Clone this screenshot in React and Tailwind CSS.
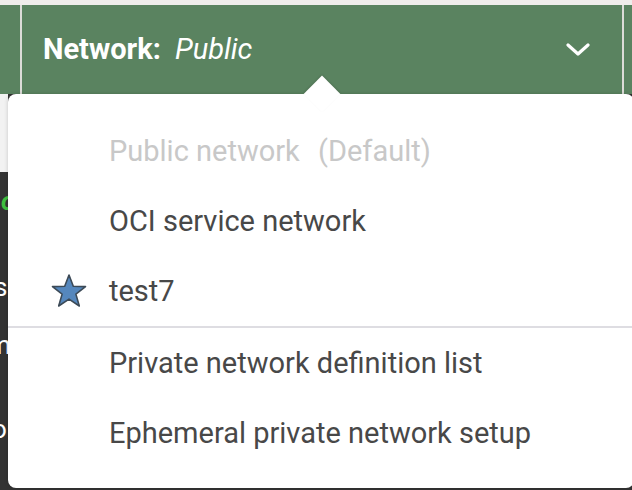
import React from "react";

const font = { fontFamily: "Roboto, 'Noto Sans', sans-serif" };

function Star() {
  return (
    <svg width="38" height="36" viewBox="0 0 38 36" className="block">
      <polygon
        points="19,2 23.3,13.2 35.5,13.6 25.9,21.1 29.3,33 19,26.1 8.7,33 12.1,21.1 2.5,13.6 14.7,13.2"
        fill="#5587bd"
        stroke="#3c4a57"
        strokeWidth="1.6"
        strokeLinejoin="round"
      />
    </svg>
  );
}

function Item({ children, icon, muted }) {
  return (
    <div className="flex h-[70px] items-center">
      <div className="flex w-[101px] shrink-0 items-center justify-end pr-[21px]">{icon}</div>
      <div className={"text-[29px] leading-none " + (muted ? "text-[#c8c8c8]" : "text-[#484848]")}>{children}</div>
    </div>
  );
}

export default function App() {
  return (
    <div className="relative h-[490px] w-[632px] overflow-hidden bg-[#333333]" style={font}>
      <div className="h-[5px] bg-[#efedeb]" />
      <div className="flex h-[89px] bg-[#5a8360]">
        <div className="w-[20px] shrink-0" />
        <div className="w-[2px] shrink-0 bg-[#dcdcd8]" />
        <div className="flex flex-1 items-center pl-[21px] pr-[32px] text-white">
          <span className="text-[29px] font-bold">Network:</span>
          <span className="ml-[14px] text-[29px] italic">Public</span>
          <span className="flex-1" />
          <svg width="24" height="14" viewBox="0 0 24 14">
            <polyline points="2,2 12,11 22,2" fill="none" stroke="white" strokeWidth="3.2" strokeLinecap="round" strokeLinejoin="round" />
          </svg>
        </div>
        <div className="w-[2px] shrink-0 bg-[#dcdcd8]" />
        <div className="w-[8px] shrink-0" />
      </div>
      <div className="flex">
        <div className="w-[8px]">
          <div className="h-[78px] bg-[#f2f2f2]" />
          <div className="flex flex-col text-[26px] leading-none text-white">
            <span className="mt-[16px] pl-[1px] font-bold italic text-[#3fbf3f]">o</span>
            <span className="mt-[60px] -ml-[6px]">s</span>
            <span className="mt-[0px] -ml-[6px]">:</span>
            <span className="mt-[6px] -ml-[12px]">m</span>
            <span className="mt-[58px] -ml-[8px]">o</span>
          </div>
        </div>
      </div>

      <div className="absolute left-[8px] top-[94px] h-[394px] w-[626px] rounded-lg bg-white pt-[22px] shadow-[0_0_4px_rgba(0,0,0,0.18)]">
        <div className="absolute -top-[18px] left-[296px] h-[26px] w-[26px] translate-x-[5px] translate-y-[5px] rotate-45 bg-white shadow-[-1px_-1px_2px_rgba(0,0,0,0.12)]" />
        <div className="relative">
          <Item muted>
            Public network <span className="ml-[11px]">(Default)</span>
          </Item>
          <Item>OCI service network</Item>
          <Item icon={<Star />}>test7</Item>
          <div className="h-[2px] bg-[#dedde2]" />
          <Item>Private network definition list</Item>
          <Item>Ephemeral private network setup</Item>
        </div>
      </div>
    </div>
  );
}
